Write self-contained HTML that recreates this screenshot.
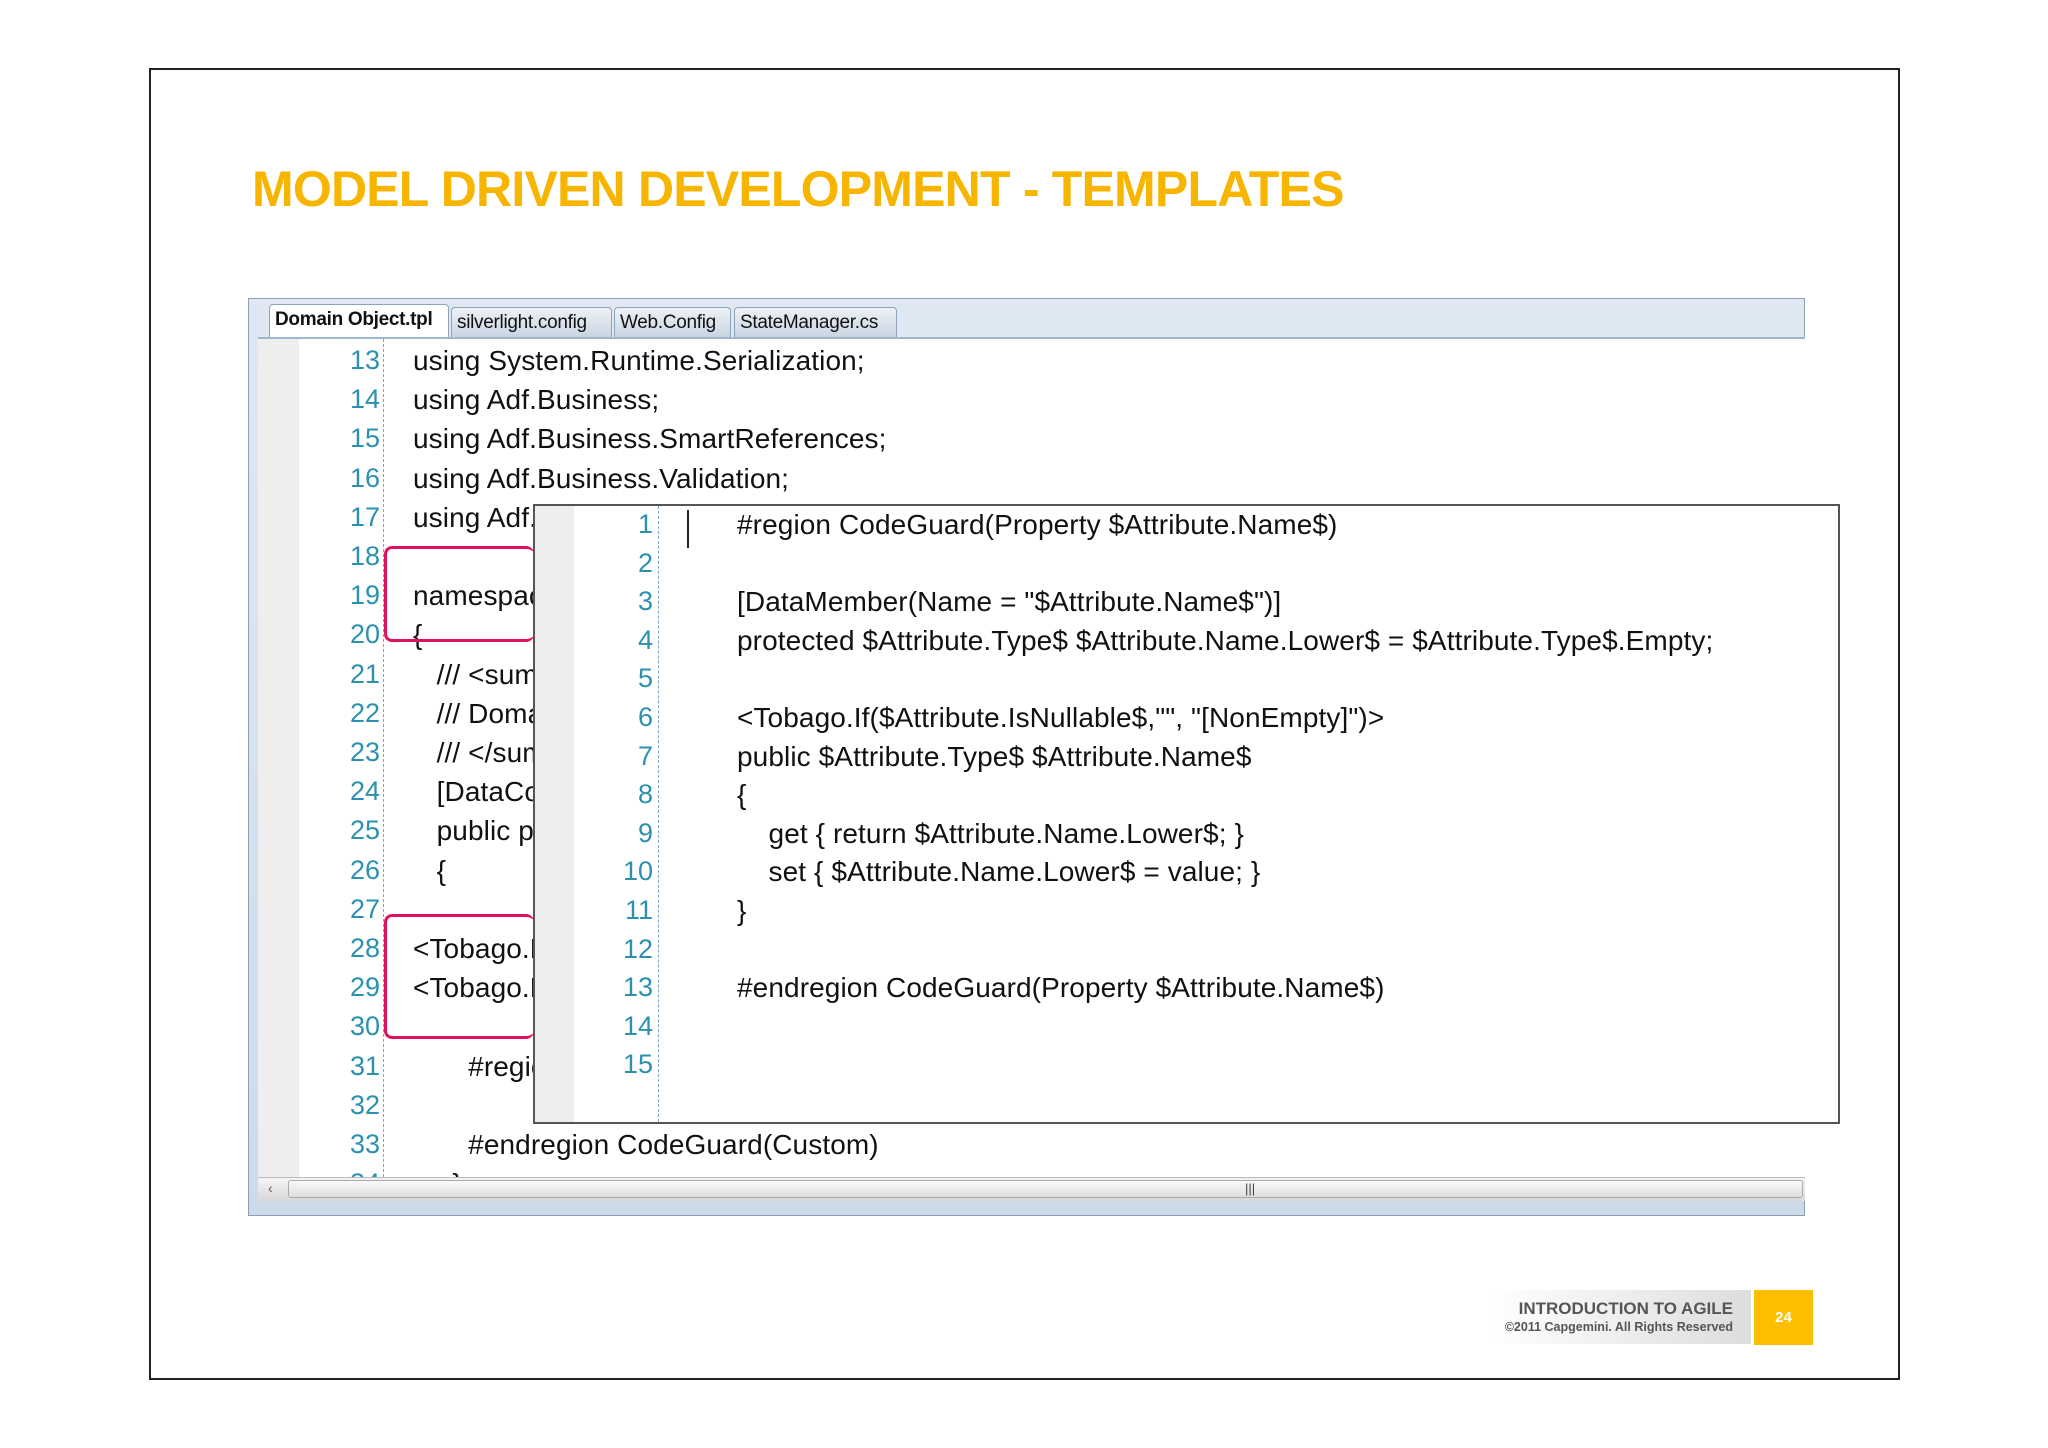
<!DOCTYPE html>
<html><head><meta charset="utf-8"><style>
*{margin:0;padding:0;box-sizing:border-box}
body{width:2048px;height:1448px;background:#fff;position:relative;overflow:hidden;font-family:"Liberation Sans",sans-serif}
.frame{position:absolute;left:149px;top:68px;width:1751px;height:1312px;border:2px solid #222}
.title{position:absolute;left:252px;top:160px;font-size:50px;font-weight:bold;color:#F7B500;letter-spacing:-0.8px;white-space:nowrap}
.panel{position:absolute;left:248px;top:298px;width:1557px;height:918px;border:1px solid #8aa0b8;background:linear-gradient(#dfe8f2,#cddbe9)}
.tabs{position:absolute;left:0;top:0;height:40px;width:100%}
.tab{position:absolute;top:8px;height:30px;font-size:19px;padding:4px 5px;background:linear-gradient(#eef2f7,#c9d5e3);border:1px solid #8ea2b8;border-bottom:none;border-radius:4px 4px 0 0;color:#111;white-space:nowrap;letter-spacing:-0.3px}
.tab.act{background:#fff;font-weight:bold;top:5px;height:34px}
.editor{position:absolute;left:9px;top:38px;width:1547px;height:840px;background:#fff;border-top:2px solid #9fb8d0;overflow:hidden}
.gm{position:absolute;left:0;top:0;width:41px;height:100%;background:#eee}
.dl{position:absolute;top:0;height:100%;border-left:1px dashed #7ab}
.ln{position:absolute;width:60px;text-align:right;color:#2b91af;font-size:27px}
.cd{position:absolute;font-size:28px;color:#111;white-space:pre;letter-spacing:0.1px}
.sb{position:absolute;left:9px;top:878px;width:1547px;height:24px;background:linear-gradient(#f4f4f4,#d8d8d8);border-top:1px solid #bbb}
.pop{position:absolute;left:533px;top:504px;width:1307px;height:620px;background:#fff;border:2px solid #555;overflow:hidden}
.pink{position:absolute;border:3px solid #e0115f;border-radius:8px;border-right:none}
</style></head><body>
<div class="frame"></div>
<div class="title">MODEL DRIVEN DEVELOPMENT - TEMPLATES</div>
<div class="panel">
 <div class="tabs">
  <div class="tab act" style="left:20px;width:180px">Domain Object.tpl</div>
  <div class="tab" style="left:202px;width:161px">silverlight.config</div>
  <div class="tab" style="left:365px;width:117px">Web.Config</div>
  <div class="tab" style="left:485px;width:163px">StateManager.cs</div>
 </div>
 <div class="editor">
  <div class="gm"></div>
  <div class="dl" style="left:125px"></div>
  <div id="L"></div>
 </div>
 <div class="sb"><div style="position:absolute;left:10px;top:2px;font-size:14px;color:#555">‹</div><div style="position:absolute;left:30px;top:2px;width:1515px;height:18px;border:1px solid #aaa;border-radius:3px;background:linear-gradient(#fafafa,#ddd)"></div><div style="position:absolute;left:987px;top:3px;font-size:13px;color:#444">|||</div></div>
</div>
<div class="pink" style="left:384px;top:546px;width:150px;height:96px"></div>
<div class="pink" style="left:384px;top:914px;width:150px;height:125px"></div>
<div class="pop">
 <div style="position:absolute;left:0;top:0;width:39px;height:100%;background:#eee"></div>
 <div class="dl" style="left:123px"></div>
 <div style="position:absolute;left:152px;top:4px;height:38px;border-left:2px solid #222"></div>
 <div id="P"></div>
</div>
<div style="position:absolute;left:1489px;top:1290px;width:262px;height:54px;background:linear-gradient(90deg,#fff,#ddd)"></div>
<div style="position:absolute;right:315px;top:1299px;font-size:17px;font-weight:bold;color:#555;text-align:right;white-space:nowrap">INTRODUCTION TO AGILE</div>
<div style="position:absolute;right:315px;top:1320px;font-size:12.5px;font-weight:bold;color:#555;white-space:nowrap">©2011 Capgemini. All Rights Reserved</div>
<div style="position:absolute;left:1754px;top:1290px;width:59px;height:55px;background:#FDBF00;color:#fff;font-weight:bold;font-size:15px;text-align:center;line-height:55px">24</div>
<script>
var L=[["13","using System.Runtime.Serialization;"],["14","using Adf.Business;"],["15","using Adf.Business.SmartReferences;"],["16","using Adf.Business.Validation;"],["17","using Adf.Business.Validation;"],["18",""],["19","namespace"],["20","{"],["21","   /// <summary>"],["22","   /// Domain"],["23","   /// </summary>"],["24","   [DataContract]"],["25","   public partial"],["26","   {"],["27",""],["28","<Tobago.L"],["29","<Tobago.L"],["30",""],["31","       #region"],["32",""],["33","       #endregion CodeGuard(Custom)"],["34","     }"]];
var h="";L.forEach(function(r,i){var y=6+i*39.2;h+='<div class="ln" style="left:62px;top:'+y+'px">'+r[0]+'</div><div class="cd" style="left:155px;top:'+y+'px">'+r[1].replace(/</g,"&lt;")+'</div>';});
document.getElementById("L").innerHTML=h;
var P=["#region CodeGuard(Property $Attribute.Name$)","","[DataMember(Name = \"$Attribute.Name$\")]","protected $Attribute.Type$ $Attribute.Name.Lower$ = $Attribute.Type$.Empty;","","<Tobago.If($Attribute.IsNullable$,\"\", \"[NonEmpty]\")>","public $Attribute.Type$ $Attribute.Name$","{","    get { return $Attribute.Name.Lower$; }","    set { $Attribute.Name.Lower$ = value; }","}","","#endregion CodeGuard(Property $Attribute.Name$)","",""];
h="";P.forEach(function(t,i){var y=3+i*38.6;h+='<div class="ln" style="left:58px;top:'+y+'px">'+(i+1)+'</div><div class="cd" style="left:202px;top:'+y+'px">'+t.replace(/</g,"&lt;")+'</div>';});
document.getElementById("P").innerHTML=h;
</script>
</body></html>
